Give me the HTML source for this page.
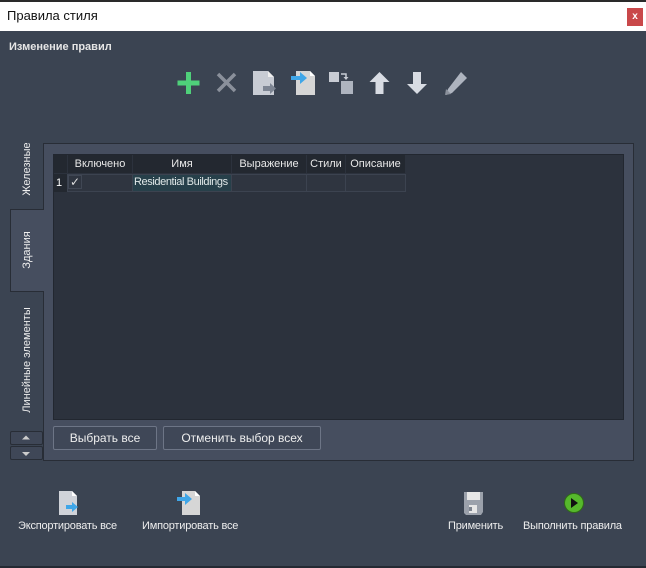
<!DOCTYPE html>
<html><head><meta charset="utf-8"><style>
*{margin:0;padding:0;box-sizing:border-box}
body{width:646px;height:568px;background:#3b4452;font-family:"Liberation Sans",sans-serif;color:#fff;position:relative;overflow:hidden;font-size:12px}
.a{position:absolute}
.t{white-space:nowrap}
.hd{position:absolute;top:155px;height:18px;background:#232830;color:#e8e8e8;font-size:11px;text-align:center;line-height:18px}
.cl{position:absolute;top:174px;height:18px;background:#2f3540;border:1px solid #3c4350}
.btn{position:absolute;top:426px;height:24px;border:1px solid #6d7586;border-radius:2px;background:#3f4757;color:#eee;font-size:12px;text-align:center;line-height:22px}
.lbl{position:absolute;top:520px;font-size:11px;color:#eee;white-space:nowrap;letter-spacing:-0.2px}
.vt{position:absolute;transform:rotate(-90deg);transform-origin:center;white-space:nowrap;font-size:11px;color:#eee}
</style></head><body>
<div class="a" style="left:0;top:0;width:646px;height:2px;background:#2a2a2a"></div>
<div class="a" style="left:0;top:2px;width:646px;height:29px;background:#fff"></div>
<div class="a t" style="left:7px;top:8px;color:#111;font-size:13px">Правила стиля</div>
<div class="a" style="left:627px;top:8px;width:16px;height:18px;background:#c9484a;color:#fff;font-size:10px;font-weight:bold;text-align:center;line-height:17px">x</div>
<div class="a t" style="left:9px;top:41px;font-size:11px;font-weight:bold;color:#e6e6e6">Изменение правил</div>

<svg class="a" style="left:170px;top:60px" width="310" height="45" viewBox="170 60 310 45">
<path d="M186 72h5v8.5h8.5v5h-8.5v8.5h-5v-8.5h-8.5v-5h8.5z" fill="#4fd07a"/>
<path d="M218 74l17 17M235 74l-17 17" stroke="#8a909b" stroke-width="3.5"/>
<path d="M253 71h15l6 6v18h-21z" fill="#c8ccd4"/><path d="M268 71v6h6z" fill="#eee"/>
<path d="M263 86h7v-3l6 5.5-6 5.5v-3h-7z" fill="#7d8593"/>
<path d="M296 71h14l5 5v19h-19z" fill="#d6d6d6"/><path d="M310 71v5h5z" fill="#fff"/>
<path d="M291 76h9v-4l7 6-7 6v-4h-9z" fill="#3fa6e8"/>
<rect x="329" y="72" width="10" height="10" fill="#c8ccd4"/><rect x="341" y="81" width="12" height="13" fill="#aeb4bf"/>
<path d="M341 74h5v4" stroke="#c8ccd4" stroke-width="1.5" fill="none"/><path d="M343.5 77h5l-2.5 3z" fill="#c8ccd4"/>
<path d="M379.5 72l10 10h-6v12h-8v-12h-6z" fill="#d8dce3"/>
<path d="M417 94l-10-10h6v-12h8v12h6z" fill="#d8dce3"/>
<path d="M461 72l6 6-15 15-6 2 2-6z" fill="#aeb4bf"/><path d="M446 89l5 5-6 1z" fill="#8a909b"/>
</svg>

<div class="a" style="left:43px;top:143px;width:591px;height:318px;background:#464e5f;border:1px solid #282d36"></div>
<div class="a" style="left:53px;top:154px;width:571px;height:266px;background:#2c323d;border:1px solid #222730"></div>
<div class="hd" style="left:54px;width:13px"></div>
<div class="hd t" style="left:68px;width:64px">Включено</div>
<div class="hd t" style="left:133px;width:98px">Имя</div>
<div class="hd t" style="left:232px;width:74px">Выражение</div>
<div class="hd t" style="left:307px;width:38px">Стили</div>
<div class="hd t" style="left:346px;width:59px">Описание</div>
<div class="a" style="left:54px;top:174px;width:13px;height:18px;background:#232830;font-size:11px;line-height:18px;padding-left:2px">1</div>
<div class="cl" style="left:67px;width:66px"></div>
<div class="a" style="left:68px;top:175px;width:14px;height:14px;border:1px solid #404754;color:#ddd;font-size:12px;line-height:13px;text-align:center">✓</div>
<div class="cl t" style="left:132px;width:100px;background:#27404a;color:#e0e8e8;font-size:11px;line-height:14px;padding-left:1px;letter-spacing:-0.4px;overflow:hidden">Residential Buildings</div>
<div class="cl" style="left:231px;width:76px"></div>
<div class="cl" style="left:306px;width:40px"></div>
<div class="cl" style="left:345px;width:61px"></div>
<div class="btn t" style="left:53px;width:104px">Выбрать все</div>
<div class="btn t" style="left:163px;width:158px">Отменить выбор всех</div>

<div class="a" style="left:10px;top:209px;width:34px;height:83px;background:#464e5f;border:1px solid #282d36;border-right:none"></div>
<div class="a" style="left:10px;top:143px;width:33px;height:66px;overflow:hidden">
<div class="vt" style="left:-18px;top:20px;width:70px;text-align:center">Железные</div></div>
<div class="vt" style="left:-13px;top:244px;width:80px;text-align:center">Здания</div>
<div class="vt" style="left:-33px;top:354px;width:120px;text-align:center">Линейные элементы</div>
<div class="a" style="left:10px;top:431px;width:33px;height:14px;background:#3f4757;border:1px solid #282d36;border-radius:2px"></div>
<div class="a" style="left:10px;top:446px;width:33px;height:14px;background:#3f4757;border:1px solid #282d36;border-radius:2px"></div>
<svg class="a" style="left:10px;top:431px" width="33" height="30"><path d="M12 8.5h8l-4-4z" fill="#ccc"/><path d="M12 21h8l-4 4z" fill="#ccc"/></svg>

<svg class="a" style="left:0;top:485px" width="646" height="35" viewBox="0 485 646 35">
<path d="M59 491h13l5 5v19h-18z" fill="#d0d3d9"/><path d="M72 491v5h5z" fill="#fff"/>
<path d="M66 505h6v-3l6 5-6 5v-3h-6z" fill="#3fa6e8"/>
<path d="M182 491h13l5 5v19h-18z" fill="#d6d6d6"/><path d="M195 491v5h5z" fill="#fff"/>
<path d="M177 497h8v-4l7 6-7 6v-4h-8z" fill="#3fa6e8"/>
<path d="M464 492h19v20l-2 3h-15l-2-2z" fill="#9ba1ab"/><rect x="467" y="492" width="13" height="8" fill="#e6e6e6"/><rect x="469" y="505" width="8" height="8" fill="#e6e6e6"/><rect x="469" y="507" width="3" height="4" fill="#7d848f"/>
<circle cx="574" cy="503" r="9.5" fill="#56b82c" stroke="#2f6a17" stroke-width="1"/><path d="M571 498l7 5-7 5z" fill="#111"/>
</svg>
<div class="lbl" style="left:18px">Экспортировать все</div>
<div class="lbl" style="left:142px">Импортировать все</div>
<div class="lbl" style="left:448px">Применить</div>
<div class="lbl" style="left:523px">Выполнить правила</div>
<div class="a" style="left:0;top:566px;width:646px;height:2px;background:#242a33"></div>
</body></html>
